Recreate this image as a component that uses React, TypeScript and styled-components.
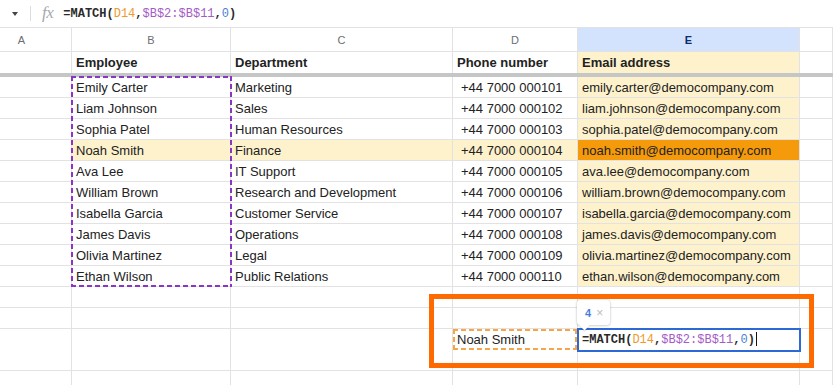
import React from "react";
import styled, { createGlobalStyle, css } from "styled-components";

const GlobalStyle = createGlobalStyle`
  html, body { margin: 0; padding: 0; background: #fff; overflow: hidden; }
  body { font-family: "Liberation Sans", Arial, sans-serif; color: #202124; }
  #root { width: 833px; height: 385px; overflow: hidden; }
`;

const COLS = "72px 159px 222px 125px 222px 1fr";
const GRID = "#e2e2e2";
const YELLOW = "#fef2cd";
const ORANGE = "#f59b0b";

const dashEdges = (color: string, dash: number, gap: number, w = 2) => {
  const h = `repeating-linear-gradient(90deg, ${color} 0 ${dash}px, transparent ${dash}px ${dash + gap}px)`;
  const v = `repeating-linear-gradient(180deg, ${color} 0 ${dash}px, transparent ${dash}px ${dash + gap}px)`;
  return css`
    background: ${h} left top / 100% ${w}px no-repeat, ${h} left bottom / 100% ${w}px no-repeat,
      ${v} left top / ${w}px 100% no-repeat, ${v} right top / ${w}px 100% no-repeat;
  `;
};

/* ---------- formula bar ---------- */
const FormulaBar = styled.div`
  height: 28px;
  box-sizing: border-box;
  border-bottom: 1px solid ${GRID};
  display: flex;
  align-items: center;
  padding-left: 12px;
`;
const Caret = styled.span`
  width: 0;
  height: 0;
  border-left: 3.5px solid transparent;
  border-right: 3.5px solid transparent;
  border-top: 4px solid #444;
  margin-right: 12px;
  margin-top: 1px;
`;
const Divider = styled.span`
  width: 1px;
  height: 15px;
  background: #dadce0;
  margin-right: 11px;
`;
const Fx = styled.span`
  font-family: "Liberation Serif", "DejaVu Serif", serif;
  font-style: italic;
  font-size: 17px;
  color: #a5a8ad;
  margin-right: 10px;
  letter-spacing: -0.5px;
  margin-top: -2px;
`;
const FormulaText = styled.span`
  font-family: "Liberation Mono", "DejaVu Sans Mono", monospace;
  font-size: 12px;
  color: #202124;
  white-space: pre;
`;
const Tok = styled.span<{ $c?: string; $bold?: boolean }>`
  color: ${(p) => p.$c ?? "#2a2a2a"};
  font-weight: ${(p) => (p.$bold ? 700 : 400)};
`;
const Cursor = styled.span`
  display: inline-block;
  width: 1px;
  height: 14px;
  background: #111;
  vertical-align: -3px;
  margin-left: 1px;
`;

const Formula: React.FC<{ cursor?: boolean }> = ({ cursor }) => (
  <FormulaText>
    <Tok $bold>=MATCH(</Tok>
    <Tok $c="#f09a2c">D14</Tok>
    <Tok $bold>,</Tok>
    <Tok $c="#a45bc7">$B$2:$B$11</Tok>
    <Tok $bold>,</Tok>
    <Tok $c="#4c7fd6">0</Tok>
    <Tok $bold>)</Tok>
    {cursor && <Cursor />}
  </FormulaText>
);

/* ---------- sheet ---------- */
const Sheet = styled.div`
  position: relative;
`;
const HeaderRow = styled.div`
  display: grid;
  grid-template-columns: ${COLS};
  height: 24px;
`;
const ColHeader = styled.div<{ $active?: boolean; $pad?: number }>`
  box-sizing: border-box;
  border-right: 1px solid ${GRID};
  border-bottom: 1px solid ${GRID};
  background: ${(p) => (p.$active ? "#d3e3fd" : "#fff")};
  color: ${(p) => (p.$active ? "#0b2d6e" : "#6b6e72")};
  font-weight: ${(p) => (p.$active ? 700 : 400)};
  font-size: 11px;
  display: flex;
  align-items: center;
  justify-content: center;
  padding-right: ${(p) => p.$pad ?? 0}px;
`;
const Row = styled.div`
  display: grid;
  grid-template-columns: ${COLS};
  height: 21px;
`;
const Cell = styled.div<{ $bg?: string; $bold?: boolean; $indent?: number; $noBottom?: boolean }>`
  box-sizing: border-box;
  border-right: 1px solid ${GRID};
  border-bottom: ${(p) => (p.$noBottom ? "none" : `1px solid ${GRID}`)};
  background: ${(p) => p.$bg ?? "#fff"};
  font-size: 13px;
  font-weight: ${(p) => (p.$bold ? 700 : 400)};
  line-height: 21px;
  padding-left: ${(p) => p.$indent ?? 4}px;
  white-space: nowrap;
  overflow: hidden;
  color: #222;
`;
const RefCell = styled(Cell)`
  ${dashEdges("#f6a548", 5, 3)}
`;
const EditCell = styled(Cell)`
  position: relative;
  z-index: 2;
  overflow: visible;
  outline: 2px solid #2c68d6;
  outline-offset: -1px;
  line-height: 20px;
`;
const FrozenRule = styled.div`
  height: 4px;
  background: #c4c7c5;
`;

/* ---------- overlays ---------- */
const CopyRange = styled.div`
  position: absolute;
  left: 71px;
  top: 48px;
  width: 161px;
  height: 211px;
  pointer-events: none;
  ${dashEdges("#8a35c4", 5, 3)}
`;
const Annotation = styled.div`
  position: absolute;
  left: 429px;
  top: 266px;
  width: 385px;
  height: 74px;
  box-sizing: border-box;
  border: 5px solid #ff6a00;
  z-index: 3;
  pointer-events: none;
`;
const Hint = styled.div`
  position: absolute;
  left: 577px;
  top: 272px;
  width: 33px;
  height: 25px;
  box-sizing: border-box;
  background: #fff;
  border-radius: 3px;
  box-shadow: 0 0 2px rgba(0, 0, 0, 0.22), 0 1px 3px rgba(0, 0, 0, 0.12);
  display: flex;
  align-items: center;
  gap: 5px;
  padding-left: 8px;
  z-index: 4;
  &::after {
    content: "";
    position: absolute;
    left: 4px;
    bottom: -4px;
    width: 7px;
    height: 7px;
    background: #fff;
    transform: rotate(45deg);
    box-shadow: 1px 1px 1px rgba(0, 0, 0, 0.12);
  }
`;
const HintNum = styled.span`
  font-size: 11px;
  font-weight: 700;
  color: #4a7fd9;
`;
const HintClose = styled.span`
  font-size: 12px;
  color: #b9bcc0;
`;

const data: [string, string, string, string][] = [
  ["Emily Carter", "Marketing", "+44 7000 000101", "emily.carter@democompany.com"],
  ["Liam Johnson", "Sales", "+44 7000 000102", "liam.johnson@democompany.com"],
  ["Sophia Patel", "Human Resources", "+44 7000 000103", "sophia.patel@democompany.com"],
  ["Noah Smith", "Finance", "+44 7000 000104", "noah.smith@democompany.com"],
  ["Ava Lee", "IT Support", "+44 7000 000105", "ava.lee@democompany.com"],
  ["William Brown", "Research and Development", "+44 7000 000106", "william.brown@democompany.com"],
  ["Isabella Garcia", "Customer Service", "+44 7000 000107", "isabella.garcia@democompany.com"],
  ["James Davis", "Operations", "+44 7000 000108", "james.davis@democompany.com"],
  ["Olivia Martinez", "Legal", "+44 7000 000109", "olivia.martinez@democompany.com"],
  ["Ethan Wilson", "Public Relations", "+44 7000 000110", "ethan.wilson@democompany.com"],
];

const EmptyRow: React.FC = () => (
  <Row>
    <Cell />
    <Cell />
    <Cell />
    <Cell />
    <Cell />
    <Cell />
  </Row>
);

export default function App() {
  return (
    <>
      <GlobalStyle />
      <FormulaBar>
        <Caret />
        <Divider />
        <Fx>fx</Fx>
        <Formula />
      </FormulaBar>
      <Sheet>
        <HeaderRow>
          <ColHeader $pad={28}>A</ColHeader>
          <ColHeader>B</ColHeader>
          <ColHeader>C</ColHeader>
          <ColHeader>D</ColHeader>
          <ColHeader $active>E</ColHeader>
          <ColHeader />
        </HeaderRow>
        <Row>
          <Cell $noBottom />
          <Cell $noBottom $bold>Employee</Cell>
          <Cell $noBottom $bold>Department</Cell>
          <Cell $noBottom $bold>Phone number</Cell>
          <Cell $noBottom $bold $bg={YELLOW}>Email address</Cell>
          <Cell $noBottom />
        </Row>
        <FrozenRule />
        {data.map(([name, dept, phone, email]) => {
          const hit = name === "Noah Smith";
          const rowBg = hit ? YELLOW : undefined;
          return (
            <Row key={name}>
              <Cell />
              <Cell $bg={rowBg}>{name}</Cell>
              <Cell $bg={rowBg}>{dept}</Cell>
              <Cell $bg={rowBg} $indent={8}>{phone}</Cell>
              <Cell $bg={hit ? ORANGE : YELLOW}>{email}</Cell>
              <Cell />
            </Row>
          );
        })}
        <EmptyRow />
        <EmptyRow />
        <Row>
          <Cell />
          <Cell />
          <Cell />
          <RefCell>Noah Smith</RefCell>
          <EditCell>
            <Formula cursor />
          </EditCell>
          <Cell />
        </Row>
        <EmptyRow />
        <EmptyRow />
        <CopyRange />
        <Annotation />
        <Hint>
          <HintNum>4</HintNum>
          <HintClose>×</HintClose>
        </Hint>
      </Sheet>
    </>
  );
}
